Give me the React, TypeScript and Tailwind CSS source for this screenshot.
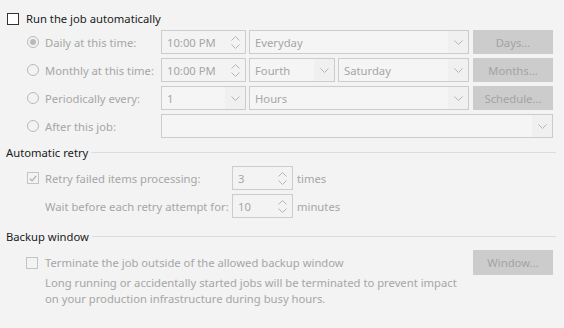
import React from 'react';

const font = { fontFamily: '"Noto Sans", "Segoe UI", sans-serif' };

function Chevron() {
  return (
    <svg width="9" height="5" viewBox="0 0 9 5">
      <path d="M0.5 0.5 L4.5 4.5 L8.5 0.5" fill="none" stroke="#b4b4b4" strokeWidth="1" />
    </svg>
  );
}

function ChevronUp() {
  return (
    <svg width="9" height="5" viewBox="0 0 9 5">
      <path d="M0.5 4.5 L4.5 0.5 L8.5 4.5" fill="none" stroke="#b4b4b4" strokeWidth="1" />
    </svg>
  );
}

function Radio({ checked }: { checked?: boolean }) {
  return (
    <span className="w-[12px] h-[12px] rounded-full border border-[#b9b9b9] bg-[#f3f3f3] flex items-center justify-center shrink-0">
      {checked && <span className="w-[6px] h-[6px] rounded-full bg-[#b9b9b9]" />}
    </span>
  );
}

function Spin({ value, width }: { value: string; width: string }) {
  return (
    <div className={`${width} h-[24px] border border-[#cccccc] flex items-center justify-between pl-[5px] pr-[5px] text-[#a6a6a6]`}>
      <span>{value}</span>
      <span className="flex flex-col gap-[3px] items-center">
        <ChevronUp />
        <Chevron />
      </span>
    </div>
  );
}

function Select({ value, width }: { value: string; width: string }) {
  return (
    <div className={`${width} h-[24px] border border-[#cccccc] flex items-stretch text-[#a6a6a6]`}>
      <span className="flex-1 flex items-center pl-[5px] bg-[#f5f5f5]">{value}</span>
      <span className="w-[20px] flex items-center justify-center bg-[#f0f0f0]">
        <Chevron />
      </span>
    </div>
  );
}

function Btn({ label, h = 'h-[24px]' }: { label: string; h?: string }) {
  return (
    <div className={`w-[80px] ${h} bg-[#cccccc] flex items-center justify-center text-[#a3a3a3] shrink-0`}>{label}</div>
  );
}

function Row({ radio, checked, children }: { radio: string; checked?: boolean; children: React.ReactNode }) {
  return (
    <div className="flex items-center h-[24px]">
      <div className="w-[134px] flex items-center gap-[6px] text-[#a6a6a6]">
        <Radio checked={checked} />
        <span>{radio}</span>
      </div>
      <div className="flex items-center">{children}</div>
    </div>
  );
}

function Heading({ label }: { label: string }) {
  return (
    <div className="flex items-center gap-[3px] pl-[6px] pr-[8px] text-[#1a1a1a]">
      <span>{label}</span>
      <span className="flex-1 h-px bg-[#dcdcdc]" />
    </div>
  );
}

export default function App() {
  return (
    <div className="w-[564px] h-[328px] bg-[#f3f3f3] text-[11.25px] leading-[15px] whitespace-nowrap overflow-hidden" style={font}>
      <div className="pt-[11px] pl-[7px] flex items-center gap-[7px] text-[#1a1a1a]">
        <span className="w-[12px] h-[12px] border border-[#333333] bg-white" />
        <span>Run the job automatically</span>
      </div>

      <div className="mt-[4px] pl-[27px] flex flex-col gap-[4px]">
        <Row radio="Daily at this time:" checked>
          <Spin value="10:00 PM" width="w-[85px]" />
          <div className="w-[3px]" />
          <Select value="Everyday" width="w-[220px]" />
          <div className="w-[4px]" />
          <Btn label="Days..." />
        </Row>
        <Row radio="Monthly at this time:">
          <Spin value="10:00 PM" width="w-[85px]" />
          <div className="w-[3px]" />
          <Select value="Fourth" width="w-[86px]" />
          <div className="w-[3px]" />
          <Select value="Saturday" width="w-[131px]" />
          <div className="w-[4px]" />
          <Btn label="Months..." />
        </Row>
        <Row radio="Periodically every:">
          <Select value="1" width="w-[85px]" />
          <div className="w-[3px]" />
          <Select value="Hours" width="w-[220px]" />
          <div className="w-[4px]" />
          <Btn label="Schedule..." />
        </Row>
        <Row radio="After this job:">
          <Select value="" width="w-[392px]" />
        </Row>
      </div>

      <div className="mt-[7px]">
        <Heading label="Automatic retry" />
      </div>

      <div className="mt-[6px] pl-[27px] flex flex-col gap-[4px] text-[#a6a6a6]">
        <div className="flex items-center h-[24px]">
          <div className="w-[205px] flex items-center gap-[6px]">
            <span className="w-[12px] h-[12px] border border-[#c4c4c4] flex items-center justify-center">
              <svg width="8" height="7" viewBox="0 0 8 7">
                <path d="M0.8 3.6 L3 5.8 L7.2 0.8" fill="none" stroke="#b0b0b0" strokeWidth="1.3" />
              </svg>
            </span>
            <span>Retry failed items processing:</span>
          </div>
          <Spin value="3" width="w-[61px]" />
          <span className="ml-[4px]">times</span>
        </div>
        <div className="flex items-center h-[24px]">
          <div className="w-[205px] pl-[18px]">Wait before each retry attempt for:</div>
          <Spin value="10" width="w-[61px]" />
          <span className="ml-[4px]">minutes</span>
        </div>
      </div>

      <div className="mt-[11px]">
        <Heading label="Backup window" />
      </div>

      <div className="mt-[6px] pl-[26px] flex text-[#a6a6a6]">
        <div className="w-[447px] flex flex-col">
          <div className="flex items-center gap-[7px] h-[25px]">
            <span className="w-[12px] h-[12px] border border-[#c4c4c4]" />
            <span>Terminate the job outside of the allowed backup window</span>
          </div>
          <div className="pl-[19px] leading-[16px]">
            Long running or accidentally started jobs will be terminated to prevent impact
            <br />
            on your production infrastructure during busy hours.
          </div>
        </div>
        <Btn label="Window..." h="h-[25px]" />
      </div>
    </div>
  );
}
